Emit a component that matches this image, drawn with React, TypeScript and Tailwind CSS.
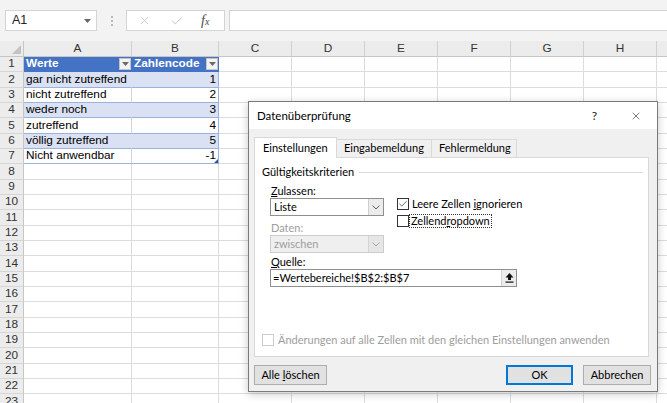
import { Check, X } from "lucide-react";

const COLS = [
  { key: "A", w: "w-[108px]" },
  { key: "B", w: "w-[87px]" },
  { key: "C", w: "w-[73px]" },
  { key: "D", w: "w-[73px]" },
  { key: "E", w: "w-[73px]" },
  { key: "F", w: "w-[73px]" },
  { key: "G", w: "w-[73px]" },
  { key: "H", w: "w-[73px]" },
  { key: "", w: "w-[73px]" },
];

const TABLE = [
  ["Werte", "Zahlencode"],
  ["gar nicht zutreffend", "1"],
  ["nicht zutreffend", "2"],
  ["weder noch", "3"],
  ["zutreffend", "4"],
  ["völlig zutreffend", "5"],
  ["Nicht anwendbar", "-1"],
];

const ROW_COUNT = 23;

function FilterButton() {
  return (
    <span className="w-[12px] h-[12px] shrink-0 bg-[#f3f3f3] border border-[#c4c4c4] flex items-center justify-center mr-[1px]">
      <svg width="7" height="4" viewBox="0 0 7 4">
        <polygon points="0,0 7,0 3.5,4" fill="#6b6b6b" />
      </svg>
    </span>
  );
}

function TableCell({ row, col }: { row: number; col: number }) {
  const text = TABLE[row - 1][col];
  if (row === 1) {
    return (
      <div
        className={`${col === 0 ? "w-[108px]" : "w-[87px]"} shrink-0 h-full bg-[#4472c4] border-b border-[#4472c4] flex items-center pl-[2px] text-white font-bold`}
      >
        <span className="flex-1">{text}</span>
        <FilterButton />
      </div>
    );
  }
  const band = row % 2 === 0;
  if (col === 0) {
    return (
      <div
        className={`w-[108px] shrink-0 h-full border-b border-b-[#9bb2de] border-r flex items-center pl-[2px] ${
          band ? "bg-[#d9e1f2] border-r-[#d9e1f2]" : "bg-white border-r-[#d6d6d6]"
        }`}
      >
        {text}
      </div>
    );
  }
  return (
    <div
      className={`relative w-[87px] shrink-0 h-full border-b border-r border-[#9bb2de] flex items-center justify-end pr-[2px] ${
        band ? "bg-[#d9e1f2]" : "bg-white"
      }`}
    >
      {text}
      {row === 7 && (
        <svg className="absolute right-0 bottom-0" width="4" height="4" viewBox="0 0 4 4">
          <polygon points="4,0 4,4 0,4" fill="#2f5597" />
        </svg>
      )}
    </div>
  );
}

function SheetRow({ n }: { n: number }) {
  return (
    <div className="flex h-[15.33px] shrink-0">
      <div className="w-[24px] shrink-0 h-full bg-[#ececec] border-r border-b border-r-[#c6c6c6] border-b-[#d6d6d6] flex items-center justify-center text-[#333]">
        {n}
      </div>
      {COLS.map((c, i) =>
        n <= 7 && i < 2 ? (
          <TableCell key={i} row={n} col={i} />
        ) : (
          <div key={i} className={`${c.w} shrink-0 h-full border-r border-b border-[#dcdcdc] bg-white`} />
        )
      )}
    </div>
  );
}

function Combo({ value, disabled }: { value: string; disabled?: boolean }) {
  return (
    <div
      className={`h-[18px] flex border ${
        disabled ? "border-[#cccccc] bg-[#efefef] text-[#9d9d9d]" : "border-[#8f8f8f] bg-white text-black"
      }`}
    >
      <div className="flex-1 flex items-center pl-[3px]">{value}</div>
      <div
        className={`w-[15px] flex items-center justify-center border-l ${
          disabled ? "border-[#d4d4d4] bg-[#e6e6e6]" : "border-[#cfcfcf] bg-[#ececec]"
        }`}
      >
        <svg width="8" height="5" viewBox="0 0 8 5">
          <polyline points="0.5,0.5 4,4 7.5,0.5" fill="none" stroke={disabled ? "#a5a5a5" : "#606060"} strokeWidth="1" />
        </svg>
      </div>
    </div>
  );
}

function CheckBox({ checked, disabled }: { checked?: boolean; disabled?: boolean }) {
  return (
    <span
      className={`w-[12px] h-[12px] shrink-0 border bg-white flex items-center justify-center ${
        disabled ? "border-[#cccccc]" : "border-[#333333]"
      }`}
    >
      {checked && <Check size={10} strokeWidth={1.6} className="text-[#222]" />}
    </span>
  );
}

function Button({ children, wide, primary }: { children: React.ReactNode; wide: string; primary?: boolean }) {
  return (
    <div
      className={`${wide} h-[20px] flex items-center justify-center bg-[#e1e1e1] border ${
        primary ? "border-[#0078d7] shadow-[inset_0_0_0_1px_#0078d7]" : "border-[#adadad]"
      }`}
    >
      {children}
    </div>
  );
}

function ValidationDialog() {
  return (
    <div className="absolute left-[248px] top-[101px] w-[410px] h-[291px] border border-[#7a7a7a] bg-[#f0f0f0] shadow-[0_2px_8px_rgba(0,0,0,0.22)] flex flex-col font-['Lato','Noto_Sans',sans-serif] text-[11px] text-black">
      {/* Title bar */}
      <div className="h-[27px] shrink-0 bg-white flex items-center pl-[8px] pr-[15px]">
        <span className="text-[11.5px]">Datenüberprüfung</span>
        <span className="ml-auto text-[12px] text-[#222]">?</span>
        <X size={12} strokeWidth={1.2} className="ml-[33px] text-[#222]" />
      </div>

      <div className="flex-1 pl-[5px] pt-[8px] flex flex-col">
        {/* Tabs */}
        <div className="flex items-end h-[20px]">
          <div className="relative z-10 w-[83px] h-[21px] -mb-px bg-white border border-b-0 border-[#d9d9d9] pl-[8px] flex items-center">
            Einstellungen
          </div>
          <div className="w-[95px] h-[18px] border border-l-0 border-b-0 border-[#d9d9d9] flex items-center pl-[7px]">
            Eingabemeldung
          </div>
          <div className="w-[85px] h-[18px] border border-l-0 border-b-0 border-[#d9d9d9] flex items-center pl-[7px]">
            Fehlermeldung
          </div>
        </div>

        {/* Panel */}
        <div className="w-[395px] h-[200px] bg-white border border-[#d9d9d9] pt-[7px] pl-[7px] pr-[5px] pb-[10px] flex flex-col">
          <div className="flex items-center h-[14px]">
            <span>Gültigkeitskriterien</span>
            <div className="flex-1 h-px bg-[#dcdcdc] ml-[5px]" />
          </div>

          <div className="flex pl-[8px] mt-[5px]">
            <div className="flex flex-col w-[114px]">
              <div className="h-[14px] flex items-center pl-[1px]">
                <span><span className="underline">Z</span>ulassen:</span>
              </div>
              <Combo value="Liste" />
              <div className="h-[14px] mt-[5px] flex items-center pl-[1px] text-[#9d9d9d]">Daten:</div>
              <Combo value="zwischen" disabled />
            </div>
            <div className="ml-[13px] mt-[14px] flex flex-col gap-[5px]">
              <div className="flex items-center h-[12px]">
                <CheckBox checked />
                <span className="ml-[3px]">
                  Leere Zellen <span className="underline">i</span>gnorieren
                </span>
              </div>
              <div className="flex items-center h-[12px]">
                <CheckBox />
                <span className="border border-dotted border-[#333] px-[1px] leading-[12px]">
                  Zellend<span className="underline">r</span>opdown
                </span>
              </div>
            </div>
          </div>

          <div className="h-[14px] mt-[2px] flex items-center pl-[9px]">
            <span><span className="underline">Q</span>uelle:</span>
          </div>
          <div className="ml-[8px] w-[247px] h-[18px] border border-[#8f8f8f] bg-white flex">
            <div className="flex-1 flex items-center pl-[2px]">=Wertebereiche!$B$2:$B$7</div>
            <div className="w-[15px] border-l border-[#cfcfcf] bg-[#ececec] flex items-center justify-center">
              <svg width="9" height="10" viewBox="0 0 9 10">
                <polygon points="4.5,0 8.5,4.5 6,4.5 6,7 3,7 3,4.5 0.5,4.5" fill="#111" />
                <rect x="0.5" y="8.5" width="8" height="1.2" fill="#111" />
              </svg>
            </div>
          </div>

          <div className="mt-auto flex items-center h-[12px]">
            <CheckBox disabled />
            <span className="ml-[4px] text-[#9d9d9d]">
              Änderungen auf alle Zellen mit den gleichen Einstellungen anwenden
            </span>
          </div>
        </div>

        {/* Buttons */}
        <div className="flex mt-[8px] pr-[6px]">
          <Button wide="w-[73px]">
            <span>
              Alle <span className="underline">l</span>öschen
            </span>
          </Button>
          <div className="ml-auto" />
          <Button wide="w-[67px]" primary>
            OK
          </Button>
          <div className="w-[10px]" />
          <Button wide="w-[68px]">Abbrechen</Button>
        </div>
      </div>
    </div>
  );
}

export default function App() {
  return (
    <div className="relative w-[667px] h-[403px] overflow-hidden bg-white font-['Liberation_Sans',Arial,sans-serif] text-[11.8px] text-black">
      {/* Formula bar */}
      <div className="h-[41px] bg-[#f3f3f3] flex items-start pt-[10px] pl-[5px]">
        <div className="w-[92px] h-[21px] bg-white border border-[#d4d4d4] flex items-center pl-[6px] pr-[5px] text-[12.5px] text-[#222]">
          <span className="flex-1">A1</span>
          <svg width="7" height="4" viewBox="0 0 7 4">
            <polygon points="0,0 7,0 3.5,4" fill="#666" />
          </svg>
        </div>
        <div className="w-[29px] h-[21px] flex flex-col items-center justify-center gap-[2px]">
          <span className="w-[2px] h-[2px] bg-[#b9b9b9]" />
          <span className="w-[2px] h-[2px] bg-[#b9b9b9]" />
          <span className="w-[2px] h-[2px] bg-[#b9b9b9]" />
        </div>
        <div className="w-[99px] h-[21px] bg-white border border-[#d4d4d4] flex items-center">
          <X size={13} strokeWidth={1.3} className="ml-[11px] text-[#bdbdbd]" />
          <Check size={14} strokeWidth={1.5} className="ml-[19px] text-[#bdbdbd]" />
          <span className="ml-[17px] italic font-['Liberation_Serif',serif] text-[14px] text-[#4a4a4a] leading-none">
            f<span className="text-[10px]">x</span>
          </span>
        </div>
        <div className="ml-[4px] flex-1 h-[21px] bg-white border border-r-0 border-[#d4d4d4]" />
      </div>

      {/* Column headers */}
      <div className="flex h-[16px] bg-[#ececec]">
        <div className="w-[24px] shrink-0 h-full border-r border-b border-[#c6c6c6] flex items-end justify-end pr-[2px] pb-[2px]">
          <svg width="9" height="9" viewBox="0 0 9 9">
            <polygon points="9,0 9,9 0,9" fill="#c3c3c3" />
          </svg>
        </div>
        {COLS.map((c, i) => (
          <div
            key={i}
            className={`${c.w} shrink-0 h-full border-r border-b border-r-[#d0d0d0] border-b-[#c6c6c6] flex items-center justify-center text-[#333]`}
          >
            {c.key}
          </div>
        ))}
      </div>

      {/* Rows */}
      {Array.from({ length: ROW_COUNT }, (_, i) => (
        <SheetRow key={i} n={i + 1} />
      ))}

      <ValidationDialog />
    </div>
  );
}
